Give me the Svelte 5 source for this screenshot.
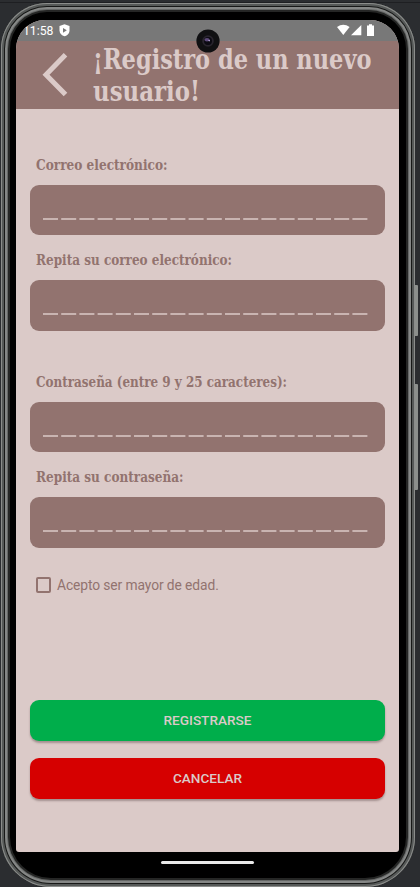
<script>
  const groups = [
    [
      { label: 'Correo electrónico:', width: 131.5, value: '' },
      { label: 'Repita su correo electrónico:', width: 196, value: '' }
    ],
    [
      { label: 'Contraseña (entre 9 y 25 caracteres):', width: 251, value: '' },
      { label: 'Repita su contraseña:', width: 147.5, value: '' }
    ]
  ];
</script>

<div class="desk">
  <div class="phone">
    <div class="screen">
      <div class="status">
        <span class="time">11:58</span>
        <svg class="shield" width="11" height="13" viewBox="0 0 11 13">
          <path d="M5.5 .3 10.5 2V6.5C10.5 9.5 8.2 11.6 5.5 12.2 2.8 11.6.5 9.5.5 6.5V2Z" fill="#fff" />
          <path d="M4 3.9 7.8 6.3 4 8.7Z" fill="#787878" />
        </svg>
        <svg class="signals" width="38" height="13" viewBox="0 0 38 13">
          <path d="M0 3Q6.3-1.5 12.6 3L6.3 11Z" fill="#fff" />
          <path d="M14 11.3 24.3 1V11.3Z" fill="#fff" />
          <path d="M30 1.5H32V.3H35V1.5H37V12H30Z" fill="#fff" />
        </svg>
      </div>
      <header>
        <svg class="back" width="28" height="46" viewBox="0 0 28 46">
          <path d="M24.5 2.8 5 22.7 24.5 42.6" fill="none" stroke="#dbcac8" stroke-width="5" />
        </svg>
        <svg class="title" width="290" height="68" role="heading" aria-level="1">
          <text x="0" y="27.5" textLength="278.5" lengthAdjust="spacingAndGlyphs">¡Registro de un nuevo</text>
          <text x="0" y="60" textLength="107" lengthAdjust="spacingAndGlyphs">usuario!</text>
        </svg>
      </header>
      <main>
        {#each groups as group}
          <section>
            {#each group as field}
              <div class="row">
                <svg class="label" width="300" height="20">
                  <text x="0" y="14.5" textLength={field.width} lengthAdjust="spacingAndGlyphs">{field.label}</text>
                </svg>
                <div class="field">
                  <svg width="327" height="2">
                    <line x1="0" y1="1" x2="325" y2="1" stroke="#dbcac8" stroke-width="1.5" stroke-dasharray="15 3.2" />
                  </svg>
                </div>
              </div>
            {/each}
          </section>
        {/each}
        <div class="accept"><span class="box"></span><span>Acepto ser mayor de edad.</span></div>
        <div class="actions">
          <button class="ok">REGISTRARSE</button>
          <button class="no">CANCELAR</button>
        </div>
      </main>
    </div>
    <div class="handle"></div>
    <svg class="camera" width="24" height="24" viewBox="0 0 24 24">
      <circle cx="12" cy="12" r="11.6" fill="#101012" />
      <circle cx="12" cy="12" r="5.8" fill="#29252e" />
      <circle cx="12" cy="12" r="4" fill="#0b0a12" />
      <ellipse cx="11" cy="10.8" rx="2.6" ry="1.7" fill="#5c4978" />
      <circle cx="13.2" cy="11.6" r=".8" fill="#b8aadb" />
    </svg>
  </div>
  <div class="key power"></div>
  <div class="key volume"></div>
</div>

<style>
  :global(body) { margin: 0; }
  .desk {
    position: relative;
    width: 420px;
    height: 887px;
    overflow: hidden;
    box-sizing: border-box;
    padding-top: 3px;
    background: linear-gradient(#2b2d30 2px, #1e1f22 2px, #1e1f22 3px, #2b2d30 3px);
  }
  .phone {
    position: relative;
    box-sizing: border-box;
    width: 414px;
    height: 884px;
    margin-left: 1px;
    padding: 17px 16px 0 15px;
    border-radius: 46px 46px 50px 50px;
    background: #000;
    box-shadow:
      inset 0 0 0 1px #8b8d8b,
      inset 0 0 0 3px #565958,
      inset 0 0 0 4px #171817,
      inset 0 0 0 6px #858786,
      inset 0 0 0 7px #656766,
      inset 0 0 0 9px #252625;
  }
  .screen {
    height: 832px;
    display: flex;
    flex-direction: column;
    overflow: hidden;
    border-radius: 29px 29px 3px 3px;
    background: #dbcac8;
  }
  .status {
    display: flex;
    height: 21px;
    flex: none;
    box-sizing: border-box;
    padding: 4px 24px 0 7px;
    background: #787878;
    color: #fff;
    font: 12.2px/14px Roboto, sans-serif;
  }
  .time { width: 36px; }
  .signals { margin-left: auto; }
  header {
    display: flex;
    flex: none;
    height: 68px;
    background: #92736f;
  }
  .back { flex: none; margin: 11px 0 0 25px; }
  .title { flex: none; margin-left: 24px; overflow: visible; }
  .title text, .label text {
    font-family: "DejaVu Serif", serif;
    font-weight: bold;
    font-size: 27px;
    fill: #dbcac8;
  }
  .label text { font-size: 14.2px; fill: #92736f; }
  .label { display: block; margin-left: 6px; overflow: visible; }
  main {
    display: flex;
    flex: 1;
    flex-direction: column;
    padding: 45.5px 14px 53px;
  }
  section { display: flex; flex-direction: column; gap: 15px; margin-bottom: 41px; }
  section:nth-of-type(2) { margin-bottom: 0; }
  .field {
    box-sizing: border-box;
    height: 50.5px;
    margin-top: 10px;
    padding: 33px 13px 0;
    border-radius: 9px;
    background: #92736f;
  }
  .field svg { display: block; }
  .accept {
    display: flex;
    align-items: center;
    gap: 6px;
    margin: 27.5px 0 0 6px;
    color: #92736f;
    font: 13.8px/20px Roboto, sans-serif;
    letter-spacing: -.09px;
  }
  .box {
    box-sizing: border-box;
    width: 15px;
    height: 16px;
    border: 2px solid #92736f;
    border-radius: 2px;
  }
  .actions { display: flex; flex-direction: column; gap: 17px; margin-top: auto; }
  button {
    height: 41px;
    padding: 0;
    border: 0;
    border-radius: 9px;
    color: #dbcac8;
    font: 500 13.6px/41px Roboto, sans-serif;
    box-shadow: 0 2px 2px rgba(60, 40, 40, .35);
  }
  .ok { background: #00ae4b; }
  .no { background: #d60000; }
  .handle {
    width: 93px;
    height: 3px;
    margin: 9px auto 0;
    border-radius: 2px;
    background: #e9e9e9;
  }
  .camera { position: absolute; left: 194.5px; top: 26px; }
  .key {
    position: absolute;
    left: 415px;
    width: 3px;
    background: #8c8f8c;
    border-radius: 0 1px 1px 0;
  }
  .power { top: 285px; height: 51px; }
  .volume { top: 384px; height: 106px; }
</style>
